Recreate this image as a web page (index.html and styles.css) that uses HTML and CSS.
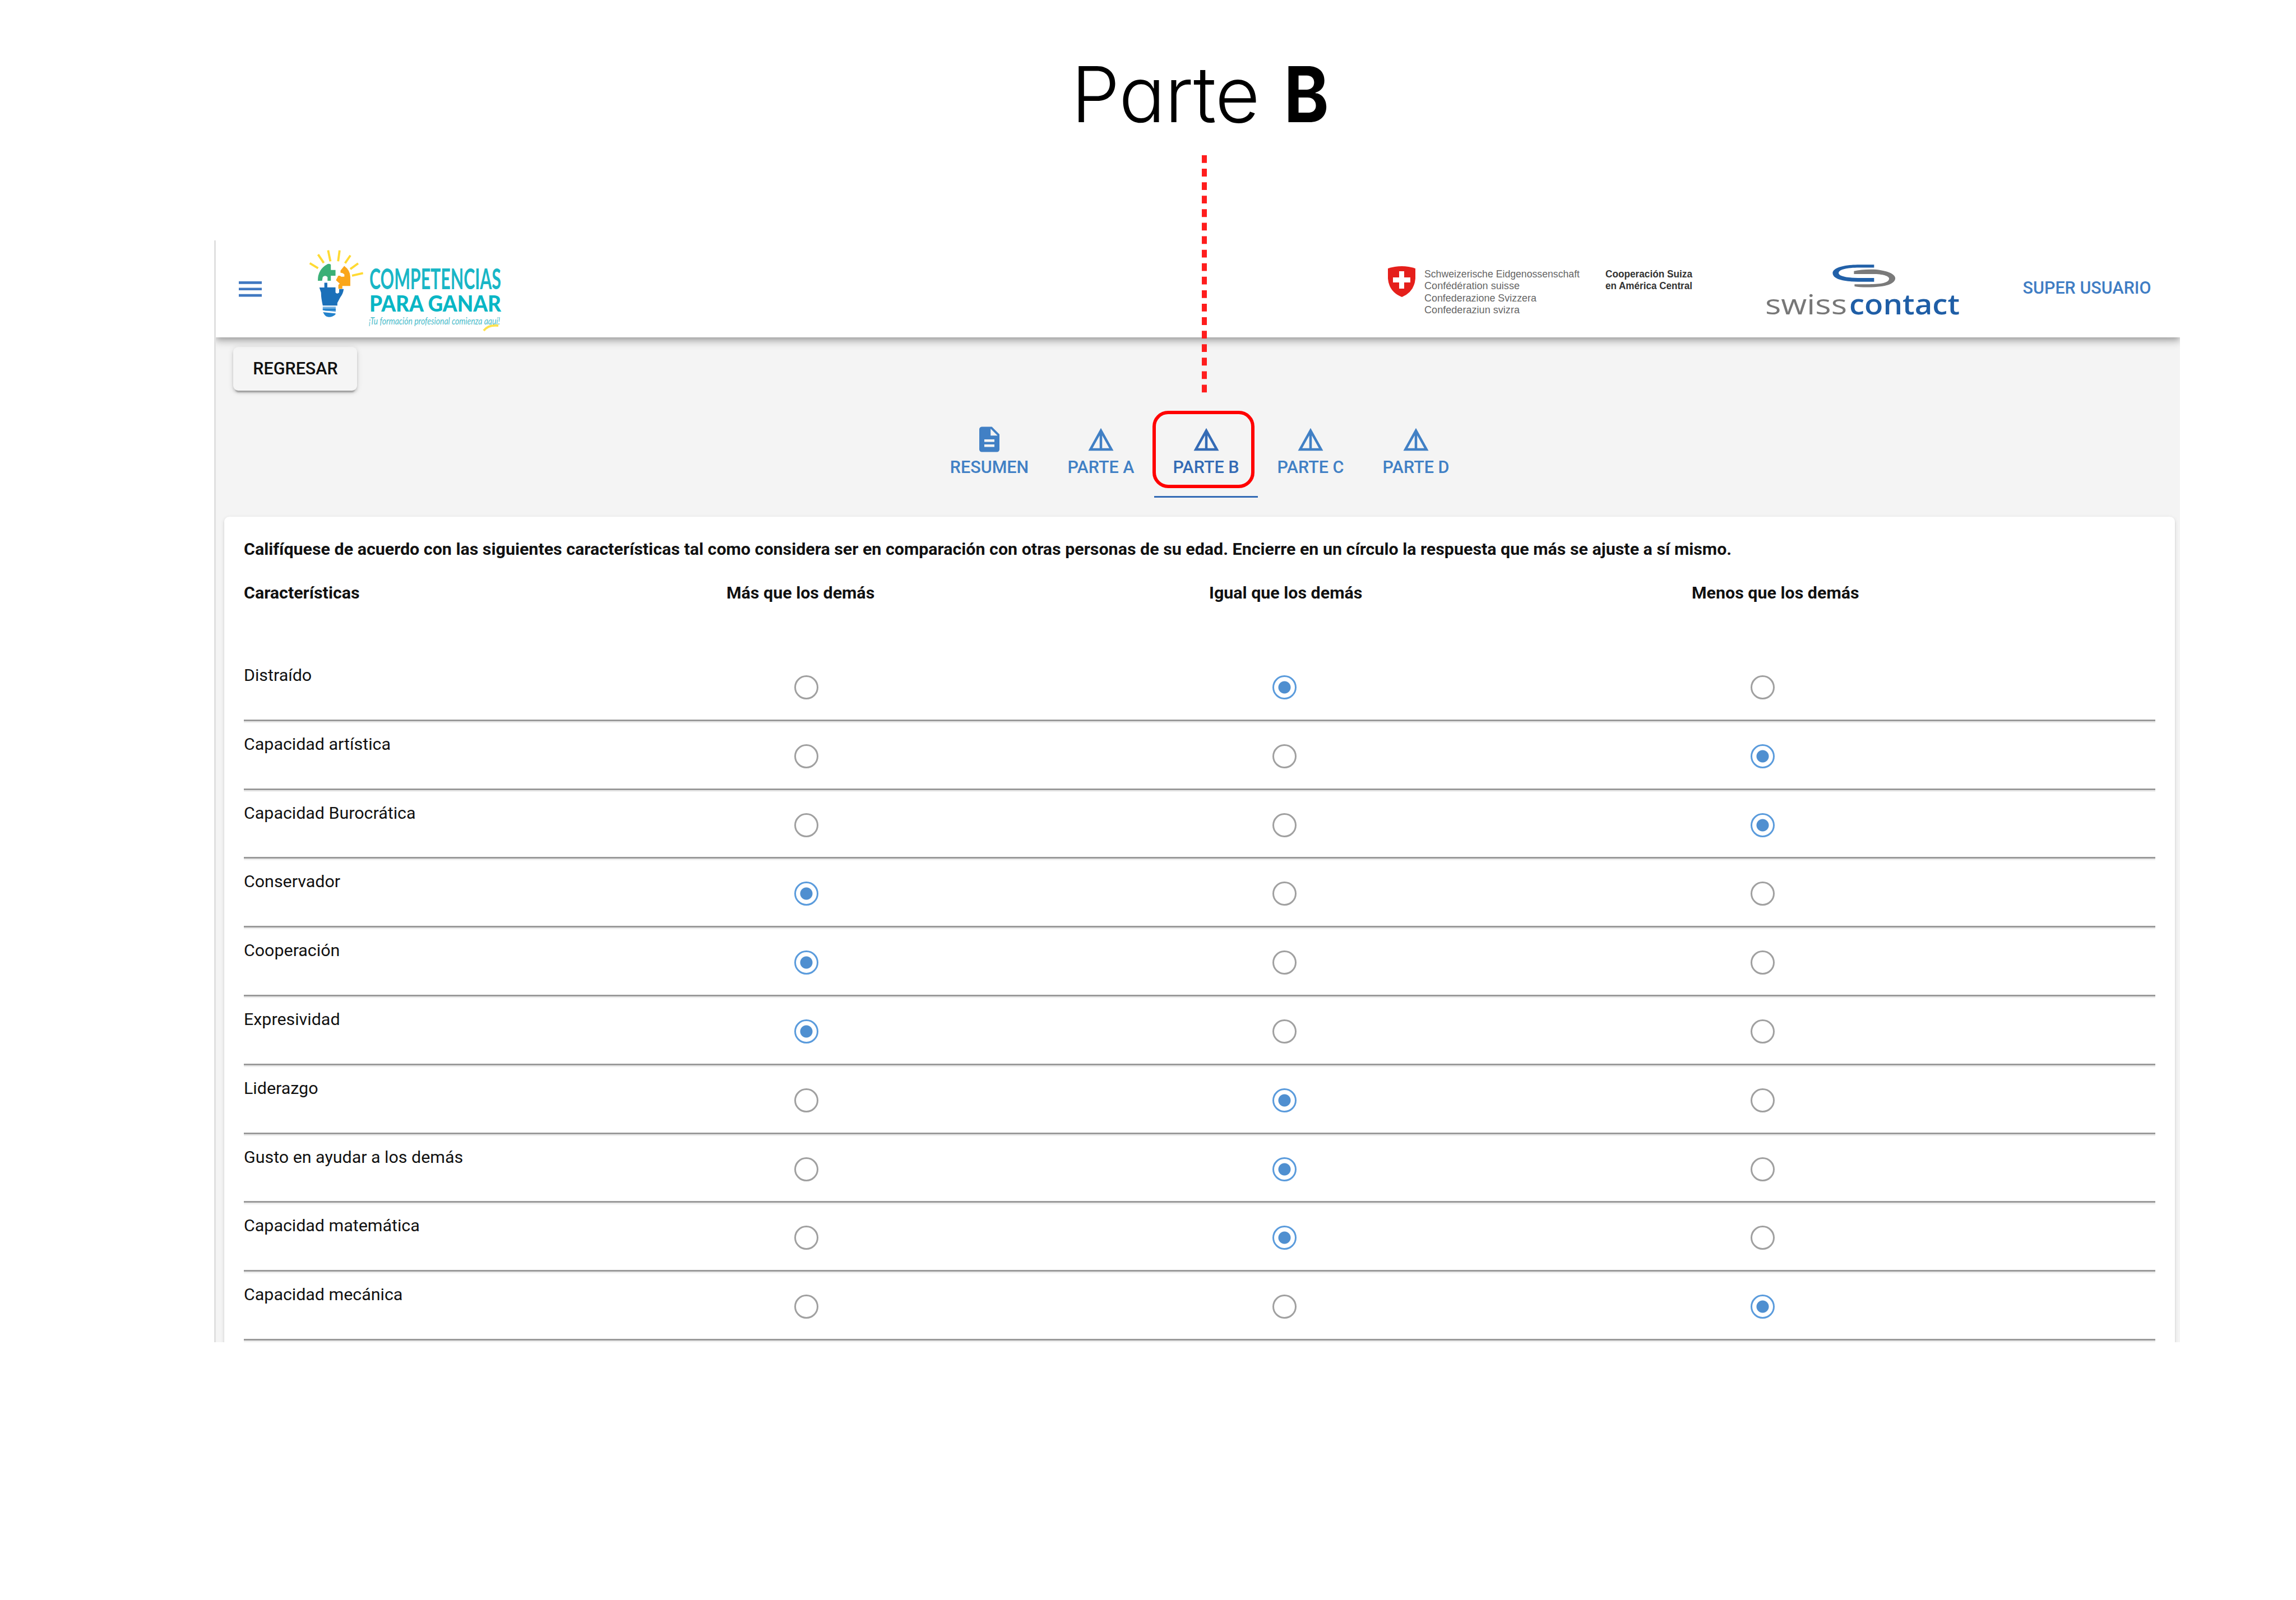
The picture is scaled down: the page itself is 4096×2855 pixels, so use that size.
FILE: index.html
```html
<!DOCTYPE html>
<html lang="es">
<head>
<meta charset="utf-8">
<title>Parte B</title>
<link rel="stylesheet" href="styles.css">
</head>
<body>
<svg class="defs" width="0" height="0">
  <symbol id="details" viewBox="0 0 24 24"><path d="M12 3L2 21h20L12 3zm1 5.92L18.6 19H13V8.92zm-2 0V19H5.4L11 8.92z"/></symbol>
</svg>
<h1 class="title">Parte <b>B</b></h1>
<svg class="pointer" width="9" height="424"><line x1="4.5" y1="0" x2="4.5" y2="424"/></svg>

<main class="app">
  <header class="bar">
    <svg class="menu" viewBox="3 6 18 12"><path d="M3 18h18v-2H3v2zm0-5h18v-2H3v2zm0-7v2h18V6H3z"/></svg>
    <svg class="bulb" viewBox="0 0 660 720">
      <path fill="none" stroke="#ffda33" stroke-width="19" d="M82 180L155 225M155 104L205 178M243 67L263 164M344 68L331 164M439 112L392 180M507 182L438 232M550 268L453 290"/>
      <path fill="#3bb077" d="M240 187Q262 182 267 195V240H308V290H267V335H238V302Q216 282 196 302L190 335H153Q150 235 240 187z"/>
      <path fill="#faa61a" d="M385 205Q438 245 438 300V380H368V405H333V372L345 360L312 330L332 290H350Q352 304 386 298V280Q370 262 352 265V245z"/>
      <path fill="#1b70b9" d="M210 352H236V393H308V438Q322 455 340 438V408H380Q375 450 350 480L324 530V553H196Q180 480 181 440L166 394H210z"/>
      <path fill="#73b0e2" d="M196 563H310V608L196 594z"/>
      <path fill="#2382cc" d="M196 580H310V598H220L196 592zM198 611L308 622V630Q285 652 250 654 222 652 210 632z"/>
    </svg>
    <svg class="wordmark" viewBox="0 0 240 120">
      <text class="w1" x="0" y="43.5" textLength="235" lengthAdjust="spacingAndGlyphs">COMPETENCIAS</text>
      <text class="w2" x="0" y="84" textLength="235" lengthAdjust="spacingAndGlyphs">PARA GANAR</text>
      <text class="w3" x="-1" y="106.5" textLength="234" lengthAdjust="spacingAndGlyphs">¡Tu formación profesional comienza aquí!</text>
      <path d="M204 118q8-11 26-9" fill="none" stroke="#ffe24d" stroke-width="4"/>
    </svg>
    <svg class="swiss" viewBox="0 0 550 100">
      <path fill="#e51f1b" d="M0 4Q25-4 49 4V22Q47 46 25 55 2 46 0 22z"/>
      <path fill="#fff" d="M20 9h9v11h11v9H29v11h-9V29H9v-9h11z"/>
      <g class="conf">
        <text x="65" y="20" textLength="277" lengthAdjust="spacingAndGlyphs">Schweizerische Eidgenossenschaft</text>
        <text x="65" y="40.5" textLength="170" lengthAdjust="spacingAndGlyphs">Confédération suisse</text>
        <text x="65" y="63" textLength="200" lengthAdjust="spacingAndGlyphs">Confederazione Svizzera</text>
        <text x="65" y="83.5" textLength="170" lengthAdjust="spacingAndGlyphs">Confederaziun svizra</text>
      </g>
      <g class="coop">
        <text x="388" y="20" textLength="155" lengthAdjust="spacingAndGlyphs">Cooperación Suiza</text>
        <text x="388" y="40.5" textLength="155" lengthAdjust="spacingAndGlyphs">en América Central</text>
      </g>
    </svg>
    <svg class="contact" viewBox="0 0 350 110">
      <svg x="104.6" y="-11.1" width="146.2" height="67" viewBox="0 0 720 330">
        <path fill="#2160a8" d="M442 76H330C160 74 78 108 78 150C78 204 180 226 300 226H442V192H300C190 192 132 175 130 150C130 120 190 102 310 102H442z"/>
        <path fill="#7a7a7a" d="M265 132Q330 116 440 118C560 126 628 160 628 195C628 245 540 274 390 274Q320 275 270 266V248H400C500 248 574 235 574 198C574 175 520 158 430 158H265z"/>
      </svg>
      <text class="s1" x="0" y="92.5" textLength="146" lengthAdjust="spacingAndGlyphs">swiss</text>
      <text class="s2" x="150" y="92.5" textLength="197" lengthAdjust="spacingAndGlyphs">contact</text>
    </svg>
    <span class="user">SUPER USUARIO</span>
  </header>

  <div class="body">
    <button class="back">REGRESAR</button>
    <nav class="tabs">
      <a class="tab t0"><svg viewBox="0 0 24 24"><path d="M14 2H6c-1.1 0-1.99.9-1.99 2L4 20c0 1.1.89 2 1.99 2H18c1.1 0 2-.9 2-2V8l-6-6zm2 16H8v-2h8v2zm0-4H8v-2h8v2zm-3-5V3.5L18.5 9H13z"/></svg>RESUMEN</a>
      <a class="tab t1"><svg><use href="#details"/></svg>PARTE A</a>
      <a class="tab t2 on"><svg><use href="#details"/></svg>PARTE B<i class="ring"></i></a>
      <a class="tab t3"><svg><use href="#details"/></svg>PARTE C</a>
      <a class="tab t4"><svg><use href="#details"/></svg>PARTE D</a>
    </nav>
    <section class="card">
      <p class="lead">Califíquese de acuerdo con las siguientes características tal como considera ser en comparación con otras personas de su edad. Encierre en un círculo la respuesta que más se ajuste a sí mismo.</p>
      <div class="heads"><span>Características</span><span>Más que los demás</span><span>Igual que los demás</span><span>Menos que los demás</span></div>
      <div class="row"><span>Distraído</span><i class="radio"></i><i class="radio sel"></i><i class="radio"></i></div>
      <div class="row"><span>Capacidad artística</span><i class="radio"></i><i class="radio"></i><i class="radio sel"></i></div>
      <div class="row"><span>Capacidad Burocrática</span><i class="radio"></i><i class="radio"></i><i class="radio sel"></i></div>
      <div class="row"><span>Conservador</span><i class="radio sel"></i><i class="radio"></i><i class="radio"></i></div>
      <div class="row"><span>Cooperación</span><i class="radio sel"></i><i class="radio"></i><i class="radio"></i></div>
      <div class="row"><span>Expresividad</span><i class="radio sel"></i><i class="radio"></i><i class="radio"></i></div>
      <div class="row"><span>Liderazgo</span><i class="radio"></i><i class="radio sel"></i><i class="radio"></i></div>
      <div class="row"><span>Gusto en ayudar a los demás</span><i class="radio"></i><i class="radio sel"></i><i class="radio"></i></div>
      <div class="row"><span>Capacidad matemática</span><i class="radio"></i><i class="radio sel"></i><i class="radio"></i></div>
      <div class="row"><span>Capacidad mecánica</span><i class="radio"></i><i class="radio"></i><i class="radio sel"></i></div>
    </section>
  </div>
</main>
</body>
</html>
```
FILE: styles.css
```css
* { box-sizing: border-box; }
html, body { margin: 0; background: #fff; }
body {
  position: relative;
  width: 4096px;
  height: 2855px;
  overflow: hidden;
  font-family: Roboto, "Liberation Sans", sans-serif;
  font-size: 30.4px;
  color: #111;
}
svg { display: block; flex: none; }
.defs { position: absolute; }

.title {
  margin: 0;
  height: 429px;
  padding: 84px 0 0 1911px;
  font: 300 138px/167px Inter, sans-serif;
  font-feature-settings: "cv11";
  letter-spacing: -1px;
  color: #000;
  white-space: nowrap;
}
.title b { display: inline-block; font-weight: 700; transform: scaleX(.88); }

.pointer { position: absolute; left: 2144.4px; top: 277px; z-index: 5; }
.pointer line { stroke: #ff1d1d; stroke-width: 9; stroke-dasharray: 13.8 10.29; }

.app {
  position: relative;
  display: flex;
  flex-direction: column;
  width: 3507px;
  height: 1966px;
  margin-left: 382px;
  border-left: 3px solid #e0e0e0;
  background: #f4f4f4;
  overflow: hidden;
}

.bar {
  position: relative;
  z-index: 2;
  display: flex;
  flex: none;
  align-items: flex-start;
  height: 173px;
  background: #fff;
  box-shadow: 0 4px 9px -2px rgba(0,0,0,.2), 0 9px 11px rgba(0,0,0,.14), 0 2px 22px rgba(0,0,0,.12);
}
.menu { width: 41px; height: 27.5px; margin: 73px 0 0 41px; fill: #4179c1; }
.bulb { width: 134px; height: 146.2px; margin: 3.5px 0 0 69px; }
.wordmark { width: 240px; height: 120px; margin: 43px 0 0 -11.5px; overflow: visible; font-family: Lato, sans-serif; }
.w1 { font-size: 51px; font-weight: 700; fill: #19b6c6; }
.w2 { font-size: 40px; font-weight: 900; fill: #09b6c5; }
.w3 { font-size: 17px; font-style: italic; fill: #4bbccb; }
.swiss { width: 550px; height: 100px; margin: 46px 0 0 1577px; font-family: "Liberation Sans", sans-serif; }
.conf { font-size: 18px; fill: #666; }
.coop { font-size: 18px; font-weight: 700; fill: #333; }
.contact { width: 350px; height: 110px; margin: 39px 0 0 123px; overflow: visible; font-family: "Open Sans", sans-serif; }
.s1 { font-size: 50px; fill: #777; }
.s2 { font-size: 50px; font-weight: 600; fill: #1f5ea6; }
.user {
  margin: 66px 0 0 110px;
  font-size: 30.5px;
  font-weight: 500;
  line-height: 37px;
  color: #3f7dc4;
  white-space: nowrap;
}

.body { display: flex; flex-direction: column; align-items: flex-start; }
.back {
  width: 221px;
  height: 78px;
  margin: 17px 0 0 31px;
  padding: 0 0 0 1px;
  border: 0;
  border-radius: 9px;
  background: #f5f5f5;
  box-shadow: 0 7px 2px -4px rgba(0,0,0,.2), 0 4px 4px rgba(0,0,0,.14), 0 2px 11px rgba(0,0,0,.12);
  font: 500 30.5px/78px Roboto, sans-serif;
  color: #111;
}
.tabs { display: flex; margin: 35px 0 0 1276px; height: 156px; color: #4180c5; }
.tab {
  position: relative;
  display: flex;
  flex-direction: column;
  align-items: center;
  padding-top: 24.5px;
  font-size: 30.5px;
  font-weight: 500;
  line-height: 37px;
  white-space: nowrap;
}
.tab svg { width: 54px; height: 54px; margin-bottom: 4px; fill: currentColor; }
.t0 { width: 208px; }
.t1 { width: 190px; }
.t2 { width: 185px; }
.t3 { width: 188px; }
.t4 { width: 188px; }
.on { color: #346bb5; border-bottom: 3px solid #346bb5; }
.ring {
  position: absolute;
  left: -3px;
  top: 1px;
  width: 182px;
  height: 138px;
  border: 6px solid #f00;
  border-radius: 28px;
}

.card {
  width: 3480px;
  margin: 34px 0 0 15px;
  padding: 0 35px 60px;
  border-radius: 9px;
  background: #fff;
  box-shadow: 0 4px 2px -2px rgba(0,0,0,.2), 0 2px 2px rgba(0,0,0,.14), 0 2px 7px rgba(0,0,0,.12);
}
.lead { margin: 38px 0 0; font-weight: 700; line-height: 40px; white-space: nowrap; }
.heads { display: grid; grid-template-columns: repeat(4, 861px); height: 126px; margin-top: 38px; line-height: 40px; font-weight: 700; }
.row {
  display: grid;
  grid-template-columns: 982px 852.75px 852.75px 1fr;
  height: 122.8px;
  border-bottom: 3px solid #9a9a9a;
  box-shadow: 0 3px #eee;
}
.row span { padding-top: 21px; line-height: 40px; }
.radio { width: 43px; height: 43px; margin-top: 41px; border: 3.5px solid #a0a0a0; border-radius: 50%; }
.sel { border-color: #5a9bdc; background: radial-gradient(circle, #4f8fd0 10.5px, #fff 11.5px); }
```
